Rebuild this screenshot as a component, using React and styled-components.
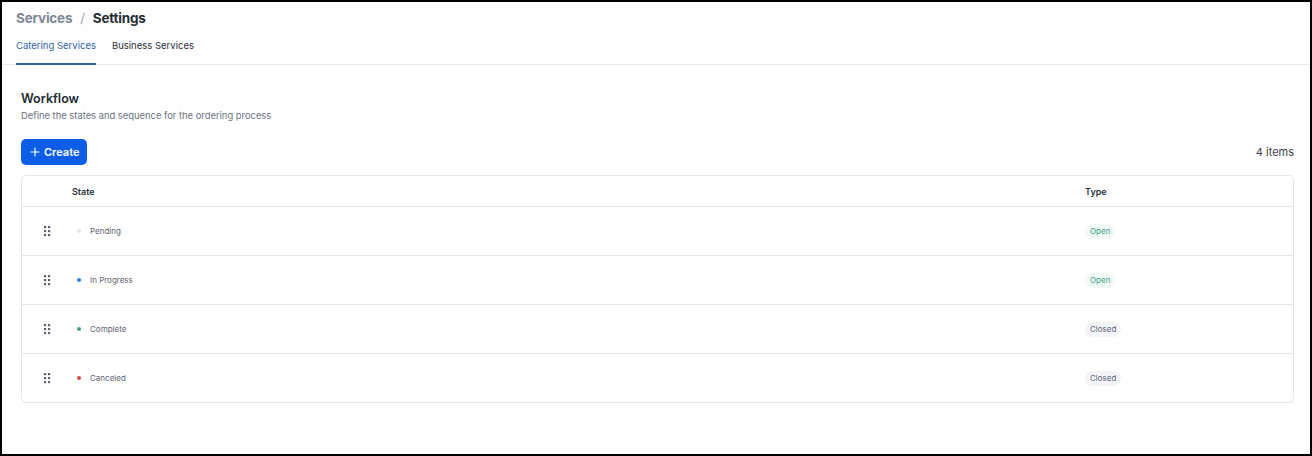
import React from "react";
import styled, { createGlobalStyle } from "styled-components";

const GlobalStyle = createGlobalStyle`
  html, body {
    margin: 0;
    padding: 0;
  }
  body {
    font-family: Inter, "Noto Sans", sans-serif;
    background: #ffffff;
    color: #1f2937;
  }
  * {
    box-sizing: border-box;
  }
`;

const Frame = styled.div`
  height: 456px;
  border: 2px solid #000;
  background: #fff;
  display: flex;
  flex-direction: column;
`;

const Header = styled.header`
  padding: 8px 14px 0;
  border-bottom: 1px solid #e7e9ee;
`;

const Breadcrumb = styled.div`
  display: flex;
  align-items: center;
  gap: 8px;
  font-size: 13.5px;
  line-height: 16px;
  font-weight: 700;
  letter-spacing: -0.2px;
`;

const Crumb = styled.span`
  color: ${(p) => (p.$current ? "#252b36" : "#7d8799")};
`;

const Slash = styled.span`
  color: #9aa2b1;
  font-weight: 400;
  font-size: 13px;
`;

const Tabs = styled.nav`
  display: flex;
  gap: 16px;
  margin-top: 11px;
`;

const Tab = styled.div`
  font-size: 9.5px;
  line-height: 12px;
  padding: 3px 0 11px;
  color: ${(p) => (p.$active ? "#2f63a8" : "#2a2f38")};
  border-bottom: 2px solid ${(p) => (p.$active ? "#2f63a8" : "transparent")};
  margin-bottom: -1px;
`;

const Content = styled.main`
  padding: 26px 16px 0 19px;
`;

const Title = styled.h2`
  margin: 0;
  font-size: 12.5px;
  line-height: 16px;
  font-weight: 600;
  color: #262c36;
`;

const Subtitle = styled.p`
  margin: 2px 0 0;
  font-size: 9.4px;
  line-height: 13px;
  color: #6b7280;
`;

const Toolbar = styled.div`
  display: flex;
  align-items: center;
  justify-content: space-between;
  margin-top: 17px;
`;

const CreateButton = styled.button`
  display: inline-flex;
  align-items: center;
  gap: 4px;
  height: 26px;
  width: 66px;
  padding: 0 0 0 9px;
  border: none;
  border-radius: 5px;
  background: #0c5ee8;
  color: #fff;
  font-family: Inter, sans-serif;
  font-size: 11px;
  font-weight: 600;
  cursor: pointer;
`;

const Count = styled.span`
  font-size: 11px;
  color: #3b414b;
`;

const Table = styled.div`
  margin-top: 10px;
  border: 1px solid #e3e5ea;
  border-radius: 5px;
  overflow: hidden;
`;

const Row = styled.div`
  display: grid;
  grid-template-columns: 50px 1013px 1fr;
  align-items: center;
  height: ${(p) => (p.$head ? "30px" : "49px")};
  border-top: ${(p) => (p.$first ? "none" : "1px solid #e3e5ea")};
`;

const HeadCell = styled.div`
  font-size: 9px;
  font-weight: 600;
  color: #2b313b;
`;

const Handle = styled.div`
  display: flex;
  justify-content: center;
`;

const StateCell = styled.div`
  display: flex;
  align-items: center;
  gap: 9px;
  padding-left: 5px;
  font-size: 8px;
  color: #5d636d;
`;

const TypeCell = styled.div`
  display: flex;
  align-items: center;
`;

const Dot = styled.span`
  width: 4px;
  height: 4px;
  border-radius: 50%;
  background: ${(p) => p.$color};
`;

const Badge = styled.span`
  display: inline-block;
  padding: 3px 5px;
  border-radius: 999px;
  font-size: 8px;
  line-height: 9px;
  background: ${(p) => (p.$open ? "#f0f8f6" : "#f2f4f8")};
  color: ${(p) => (p.$open ? "#44a088" : "#5c6477")};
`;

const Grip = () => (
  <svg width="7" height="11" viewBox="0 0 7 11">
    {[0, 4, 8].map((y) =>
      [0, 4].map((x) => (
        <rect key={`${x}-${y}`} x={x} y={y} width="2.2" height="2.2" fill="#5f6570" />
      ))
    )}
  </svg>
);

const states = [
  { name: "Pending", color: "#e2e4e8", type: "Open" },
  { name: "In Progress", color: "#2f7fd6", type: "Open" },
  { name: "Complete", color: "#4f9a7a", type: "Closed" },
  { name: "Canceled", color: "#cf4b4b", type: "Closed" },
];

export default function App() {
  return (
    <>
      <GlobalStyle />
      <Frame>
        <Header>
          <Breadcrumb>
            <Crumb>Services</Crumb>
            <Slash>/</Slash>
            <Crumb $current>Settings</Crumb>
          </Breadcrumb>
          <Tabs>
            <Tab $active>Catering Services</Tab>
            <Tab>Business Services</Tab>
          </Tabs>
        </Header>
        <Content>
          <Title>Workflow</Title>
          <Subtitle>Define the states and sequence for the ordering process</Subtitle>
          <Toolbar>
            <CreateButton>
              <svg width="10" height="10" viewBox="0 0 10 10">
                <path d="M5 0.5v9M0.5 5h9" stroke="#fff" strokeWidth="1.2" />
              </svg>
              Create
            </CreateButton>
            <Count>4 items</Count>
          </Toolbar>
          <Table>
            <Row $head $first>
              <span />
              <HeadCell>State</HeadCell>
              <HeadCell>Type</HeadCell>
            </Row>
            {states.map((s) => (
              <Row key={s.name}>
                <Handle>
                  <Grip />
                </Handle>
                <StateCell>
                  <Dot $color={s.color} />
                  {s.name}
                </StateCell>
                <TypeCell>
                  <Badge $open={s.type === "Open"}>{s.type}</Badge>
                </TypeCell>
              </Row>
            ))}
          </Table>
        </Content>
      </Frame>
    </>
  );
}
